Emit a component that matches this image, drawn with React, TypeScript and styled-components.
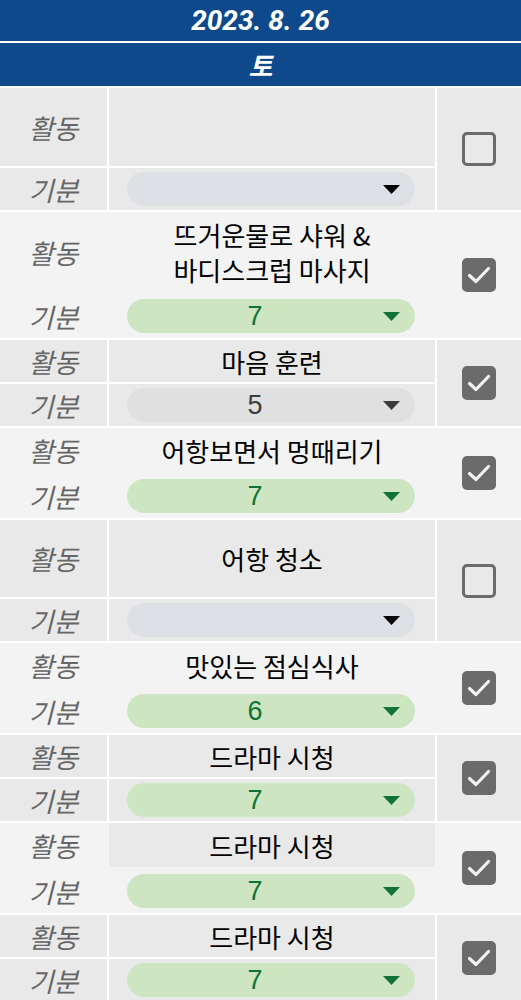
import React from 'react';
import styled, { createGlobalStyle } from 'styled-components';

const GlobalStyle = createGlobalStyle`
    body {
        margin: 0;
        background: #ffffff;
        font-family: "Noto Sans CJK KR", "Noto Sans", sans-serif;
    }
`;

type Tone = 'gray' | 'light';

type Entry = {
    activity: string[];
    mood: number | null;
    checked: boolean;
    tone: Tone;
    topHeight: number;
    highlight?: boolean;
};

const entries: Entry[] = [
    { activity: [], mood: null, checked: false, tone: 'gray', topHeight: 78 },
    { activity: ['뜨거운물로 샤워 &', '바디스크럽 마사지'], mood: 7, checked: true, tone: 'light', topHeight: 80 },
    { activity: ['마음 훈련'], mood: 5, checked: true, tone: 'gray', topHeight: 42 },
    { activity: ['어항보면서 멍때리기'], mood: 7, checked: true, tone: 'light', topHeight: 44 },
    { activity: ['어항 청소'], mood: null, checked: false, tone: 'gray', topHeight: 77 },
    { activity: ['맛있는 점심식사'], mood: 6, checked: true, tone: 'light', topHeight: 44 },
    { activity: ['드라마 시청'], mood: 7, checked: true, tone: 'gray', topHeight: 42 },
    { activity: ['드라마 시청'], mood: 7, checked: true, tone: 'light', topHeight: 44, highlight: true },
    { activity: ['드라마 시청'], mood: 7, checked: true, tone: 'gray', topHeight: 42 },
];

const Page = styled.div`
    width: 521px;
    overflow: hidden;
`;

const Header = styled.header`
    display: flex;
    flex-direction: column;
    gap: 2px;
    padding-bottom: 2px;
    background: #ffffff;
`;

const Band = styled.div<{ $height: number; $size: number }>`
    height: ${({ $height }) => $height}px;
    background: #0e4a8b;
    color: #ffffff;
    display: flex;
    align-items: center;
    justify-content: center;
    font-family: Roboto, "Noto Sans CJK KR", sans-serif;
    font-weight: 700;
    font-style: italic;
    font-size: ${({ $size }) => $size}px;
`;

const Row = styled.section<{ $tone: Tone; $top: number }>`
    display: grid;
    grid-template-columns: 107px 326px 84px;
    grid-template-rows: ${({ $top, $tone }) => `${$top}px ${$tone === 'gray' ? 42 : 44}px`};
    column-gap: 2px;
    row-gap: 2px;
    margin-bottom: 2px;
    background: ${({ $tone }) => ($tone === 'gray' ? '#ffffff' : '#f3f3f3')};
`;

const Cell = styled.div<{ $bg: string }>`
    background: ${({ $bg }) => $bg};
    display: flex;
    align-items: center;
    justify-content: center;
`;

const Label = styled(Cell)`
    color: #666666;
    font-style: italic;
    font-size: 27px;
`;

const Activity = styled(Cell)`
    flex-direction: column;
    color: #000000;
    font-size: 26px;
    line-height: 35px;
    text-align: center;
`;

const MoodCell = styled(Cell)`
    justify-content: flex-start;
    padding-left: 18px;
`;

const CheckCell = styled(Cell)`
    grid-column: 3;
    grid-row: 1 / span 2;
`;

type PillKind = 'empty' | 'neutral' | 'good';

const pillColors: Record<PillKind, { bg: string; fg: string; arrow: string }> = {
    empty: { bg: '#dde1e5', fg: '#000000', arrow: '#000000' },
    neutral: { bg: '#e0e0e0', fg: '#3c3c3c', arrow: '#3c3c3c' },
    good: { bg: '#cde6c1', fg: '#127338', arrow: '#127338' },
};

const Pill = styled.div<{ $kind: PillKind }>`
    width: 288px;
    height: 34px;
    border-radius: 17px;
    background: ${({ $kind }) => pillColors[$kind].bg};
    color: ${({ $kind }) => pillColors[$kind].fg};
    display: flex;
    align-items: center;
    font-family: "Liberation Sans", Arial, sans-serif;
    font-size: 27px;
`;

const PillValue = styled.span`
    flex: 1;
    text-align: center;
`;

const Arrow = styled.svg`
    margin-right: 15px;
    flex-shrink: 0;
`;

const Box = styled.div<{ $checked: boolean }>`
    width: 34px;
    height: 34px;
    box-sizing: border-box;
    border-radius: 5px;
    border: 3px solid #6b6b6b;
    background: ${({ $checked }) => ($checked ? '#6b6b6b' : 'transparent')};
    display: flex;
    align-items: center;
    justify-content: center;
`;

const moodKind = (mood: number | null): PillKind => {
    if (mood === null) return 'empty';
    return mood >= 6 ? 'good' : 'neutral';
};

const MoodPill: React.FC<{ mood: number | null }> = ({ mood }) => {
    const kind = moodKind(mood);
    return (
        <Pill $kind={kind}>
            <PillValue>{mood ?? ''}</PillValue>
            <Arrow width="17" height="9" viewBox="0 0 17 9">
                <polygon points="0,0 17,0 8.5,9" fill={pillColors[kind].arrow} />
            </Arrow>
        </Pill>
    );
};

const CheckBox: React.FC<{ checked: boolean }> = ({ checked }) => (
    <Box $checked={checked}>
        {checked && (
            <svg width="26" height="26" viewBox="0 0 26 26">
                <polyline
                    points="3.5,13.5 10,19.5 22.5,6.5"
                    fill="none"
                    stroke="#f2f2f2"
                    strokeWidth="3.2"
                    strokeLinecap="round"
                    strokeLinejoin="round"
                />
            </svg>
        )}
    </Box>
);

const App: React.FC = () => {
    return (
        <>
            <GlobalStyle />
            <Page>
                <Header>
                    <Band $height={41} $size={28}>2023. 8. 26</Band>
                    <Band $height={43} $size={26}>토</Band>
                </Header>

                {entries.map((entry, idx) => {
                    const bg = entry.tone === 'gray' ? '#e9e9e9' : '#f3f3f3';
                    return (
                        <Row key={idx} $tone={entry.tone} $top={entry.topHeight}>
                            <Label $bg={bg}>활동</Label>
                            <Activity $bg={entry.highlight ? '#e9e9e9' : bg}>
                                {entry.activity.map((line) => (
                                    <span key={line}>{line}</span>
                                ))}
                            </Activity>
                            <CheckCell $bg={bg}>
                                <CheckBox checked={entry.checked} />
                            </CheckCell>
                            <Label $bg={bg}>기분</Label>
                            <MoodCell $bg={bg}>
                                <MoodPill mood={entry.mood} />
                            </MoodCell>
                        </Row>
                    );
                })}
            </Page>
        </>
    );
};

export default App;
